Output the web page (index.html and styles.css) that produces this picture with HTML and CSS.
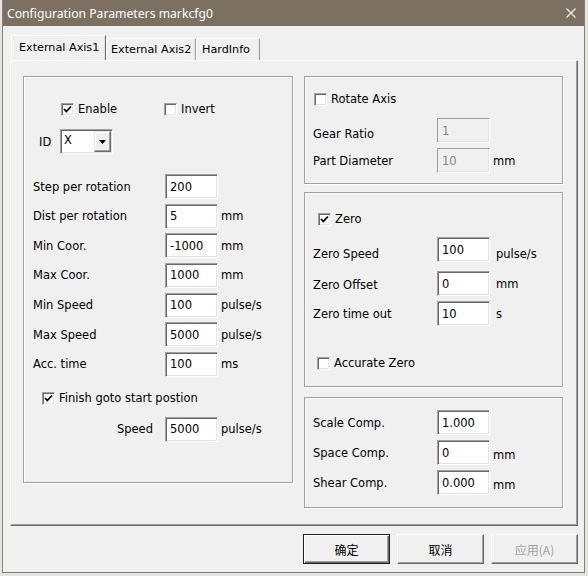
FILE: index.html
```html
<!DOCTYPE html>
<html lang="en">
<head>
    <meta charset="UTF-8">
    <title>Configuration Parameters markcfg0</title>
    <link rel="stylesheet" href="styles.css">
</head>
<body>
    <div class="window">
        <div class="titlebar">
            <span class="title">Configuration Parameters markcfg0</span>
            <svg class="close" width="10" height="10" viewBox="0 0 10 10">
                <path d="M0.5 0.5 L9.5 9.5 M9.5 0.5 L0.5 9.5" stroke="#fff" stroke-width="1.1" fill="none"/>
            </svg>
        </div>

        <div class="client">
            <div class="tabs">
                <div class="tab active">External Axis1</div>
                <div class="tab tab2">External Axis2</div>
                <div class="tab tab3">HardInfo</div>
            </div>

            <div class="page">
                <!-- eixo principal -->
                <div class="group g-main">
                    <div class="opts">
                        <label class="chk chk-first"><span class="box checked"><svg width="9" height="9" viewBox="0 0 9 9"><path d="M1 4 L3.3 6.5 L8 1.5" stroke="#000" stroke-width="1.8" fill="none"/></svg></span>Enable</label>
                        <label class="chk"><span class="box"></span>Invert</label>
                    </div>

                    <div class="id-row">
                        <span class="id-lbl">ID</span>
                        <div class="combo">
                            <span class="combo-val">X</span>
                            <span class="drop"><svg width="7" height="4" viewBox="0 0 7 4"><path d="M0 0 H7 L3.5 4 Z" fill="#000"/></svg></span>
                        </div>
                    </div>

                    <div class="fields">
                        <div class="row"><span class="lbl">Step per rotation</span><span class="field">200</span></div>
                        <div class="row"><span class="lbl">Dist per rotation</span><span class="field">5</span><span class="unit">mm</span></div>
                        <div class="row"><span class="lbl">Min Coor.</span><span class="field">-1000</span><span class="unit">mm</span></div>
                        <div class="row"><span class="lbl">Max Coor.</span><span class="field">1000</span><span class="unit">mm</span></div>
                        <div class="row"><span class="lbl">Min Speed</span><span class="field">100</span><span class="unit">pulse/s</span></div>
                        <div class="row"><span class="lbl">Max Speed</span><span class="field">5000</span><span class="unit">pulse/s</span></div>
                        <div class="row"><span class="lbl">Acc. time</span><span class="field">100</span><span class="unit">ms</span></div>
                    </div>

                    <label class="chk finish"><span class="box checked"><svg width="9" height="9" viewBox="0 0 9 9"><path d="M1 4 L3.3 6.5 L8 1.5" stroke="#000" stroke-width="1.8" fill="none"/></svg></span>Finish goto start postion</label>

                    <div class="row speed-row"><span class="lbl">Speed</span><span class="field">5000</span><span class="unit">pulse/s</span></div>
                </div>

                <div class="col">
                    <!-- eixo rotativo -->
                    <div class="group g-rotate">
                        <label class="chk"><span class="box"></span>Rotate Axis</label>
                        <div class="rrows">
                            <div class="row r1"><span class="lbl">Gear Ratio</span><span class="field off">1</span></div>
                            <div class="row"><span class="lbl">Part Diameter</span><span class="field off">10</span><span class="unit">mm</span></div>
                        </div>
                    </div>

                    <!-- zero -->
                    <div class="group g-zero">
                        <label class="chk"><span class="box checked"><svg width="9" height="9" viewBox="0 0 9 9"><path d="M1 4 L3.3 6.5 L8 1.5" stroke="#000" stroke-width="1.8" fill="none"/></svg></span>Zero</label>
                        <div class="rrows">
                            <div class="row z1"><span class="lbl">Zero Speed</span><span class="field">100</span><span class="unit">pulse/s</span></div>
                            <div class="row z2"><span class="lbl">Zero Offset</span><span class="field">0</span><span class="unit">mm</span></div>
                            <div class="row z3"><span class="lbl">Zero time out</span><span class="field">10</span><span class="unit">s</span></div>
                        </div>
                        <label class="chk accurate"><span class="box"></span>Accurate Zero</label>
                    </div>

                    <!-- compensacao -->
                    <div class="group g-comp">
                        <div class="rrows">
                            <div class="row"><span class="lbl">Scale Comp.</span><span class="field">1.000</span></div>
                            <div class="row"><span class="lbl">Space Comp.</span><span class="field">0</span><span class="unit">mm</span></div>
                            <div class="row"><span class="lbl">Shear Comp.</span><span class="field">0.000</span><span class="unit">mm</span></div>
                        </div>
                    </div>
                </div>
            </div>

            <div class="buttons">
                <button class="btn default">确定</button>
                <button class="btn">取消</button>
                <button class="btn" disabled>应用(A)</button>
            </div>
        </div>
    </div>
</body>
</html>
```

FILE: styles.css
```css
* {
    box-sizing: border-box;
}
html, body {
    margin: 0;
    padding: 0;
}
body {
    width: 588px;
    height: 576px;
    overflow: hidden;
    background-color: #e4e4e4;
    font-family: "DejaVu Sans", sans-serif;
    font-size: 11.5px;
    color: #000;
}
.window {
    margin-left: 2px;
    width: 583px;
    height: 573px;
    background-color: #f0f0f0;
    border: 1px solid #8a8070;
    border-top: none;
}
.titlebar {
    height: 26px;
    background-color: #7c7160;
    color: #fff;
    display: flex;
    align-items: center;
    padding: 0 8px 0 4px;
    font-family: "Noto Sans", sans-serif;
    font-size: 12.2px;
}
.close {
    margin-left: auto;
}
.client {
    padding: 9px 0 0 7px;
}

/* abas */
.tabs {
    display: flex;
    align-items: flex-end;
    height: 25px;
    padding-left: 1px;
    font-size: 11.2px;
}
.tab {
    height: 22px;
    width: 90px;
    padding-left: 4px;
    white-space: nowrap;
    display: flex;
    align-items: center;
    border: 1px solid;
    border-bottom: none;
    border-color: #fff #a0a0a0 transparent #fff;
    box-shadow: inset -1px 0 0 #e3e3e3;
}
.tab.active {
    height: 25px;
    width: 95px;
    padding-left: 7px;
    padding-bottom: 2px;
    border-right-color: #696969;
}
.tab3 {
    width: 64px;
    padding-left: 5px;
}

.page {
    width: 568px;
    height: 466px;
    border: 1px solid;
    border-color: #fff #696969 #696969 #fff;
    box-shadow: inset -1px -1px 0 #a0a0a0;
    display: flex;
    gap: 11px;
    padding: 15px 0 0 12px;
}
.group {
    border: 1px solid #a0a0a0;
    box-shadow: inset 1px 1px 0 #fff, 1px 1px 0 #fff;
}
.g-main {
    width: 270px;
    height: 407px;
    padding-top: 26px;
}
.col {
    display: flex;
    flex-direction: column;
    width: 259px;
}
.g-rotate {
    height: 108px;
    padding: 16px 0 0 9px;
}
.g-zero {
    height: 195px;
    margin-top: 8px;
    padding: 20px 0 0 13px;
}
.g-comp {
    height: 111px;
    margin-top: 10px;
    padding-top: 12px;
}

/* checkbox */
.chk {
    display: flex;
    align-items: center;
    height: 13px;
    line-height: 13px;
    white-space: nowrap;
}
.box {
    width: 13px;
    height: 13px;
    margin-right: 4px;
    background-color: #fff;
    border: 1px solid;
    border-color: #a0a0a0 #fff #fff #a0a0a0;
    box-shadow: inset 1px 1px 0 #696969, inset -1px -1px 0 #e3e3e3;
    display: flex;
    align-items: center;
    justify-content: center;
}
.opts {
    display: flex;
    padding-left: 37px;
}
.chk-first {
    width: 103px;
}

.id-row {
    display: flex;
    align-items: center;
    margin-top: 13px;
    padding-left: 15px;
}
.id-lbl {
    width: 21px;
}
.combo {
    width: 53px;
    height: 25px;
    padding: 1px;
    display: flex;
    background-color: #fff;
    border: 1px solid;
    border-color: #a0a0a0 #fff #fff #a0a0a0;
    box-shadow: inset 1px 1px 0 #696969, inset -1px -1px 0 #e3e3e3;
}
.combo-val {
    flex: 1;
    padding-left: 2px;
    line-height: 19px;
}
.drop {
    width: 17px;
    height: 21px;
    background-color: #f0f0f0;
    border: 1px solid;
    border-color: #e3e3e3 #696969 #696969 #e3e3e3;
    box-shadow: inset -1px -1px 0 #a0a0a0, inset 1px 1px 0 #fff;
    display: flex;
    align-items: center;
    justify-content: center;
}

/* linhas de campos */
.row {
    display: flex;
    align-items: center;
    height: 25px;
}
.fields {
    margin-top: 20px;
    padding-left: 9px;
    display: flex;
    flex-direction: column;
    gap: 4.67px;
}
.lbl {
    width: 132px;
    white-space: nowrap;
}
.field {
    width: 53px;
    height: 25px;
    padding-left: 4px;
    display: flex;
    align-items: center;
    background-color: #fff;
    border: 1px solid;
    border-color: #a0a0a0 #fff #fff #a0a0a0;
    box-shadow: inset 1px 1px 0 #696969, inset -1px -1px 0 #e3e3e3;
}
.field.off {
    background-color: #f0f0f0;
    color: #838383;
    box-shadow: inset -1px -1px 0 #e3e3e3;
}
.unit {
    margin-left: 3px;
}
.finish {
    margin-top: 15px;
    padding-left: 18px;
}
.speed-row {
    margin-top: 12px;
    padding-left: 9px;
}
.speed-row .lbl {
    text-align: right;
    padding-right: 12px;
}

.rrows {
    display: flex;
    flex-direction: column;
    gap: 5px;
    padding-left: 8px;
}
.rrows .lbl {
    width: 124px;
}
.g-rotate .rrows {
    margin-top: 12px;
    margin-left: -9px;
}
.r1 .lbl {
    margin-top: 6px;
}
.g-zero .rrows {
    margin-top: 11px;
    margin-left: -13px;
}
.g-zero .unit {
    margin-left: 6px;
}
.z1 .lbl, .z1 .unit {
    margin-top: 8px;
}
.z2 {
    margin-top: 4px;
}
.z2 .lbl {
    margin-top: 3px;
}
.accurate {
    margin-top: 31px;
    margin-left: -1px;
}
.g-comp .unit {
    margin-top: 5px;
}

/* botoes */
.buttons {
    display: flex;
    gap: 7px;
    margin-top: 8px;
    padding-left: 293px;
}
.btn {
    width: 87px;
    height: 30px;
    padding: 0;
    font-family: "Noto Sans CJK SC", sans-serif;
    font-size: 12px;
    color: #000;
    background-color: #f0f0f0;
    border: 1px solid;
    border-color: #fff #696969 #696969 #fff;
    box-shadow: inset -1px -1px 0 #a0a0a0;
}
.btn.default {
    border: 1px solid #1e1e1e;
    box-shadow: inset 1px 1px 0 #fff, inset -1px -1px 0 #696969, inset -2px -2px 0 #a0a0a0;
}
.btn:disabled {
    color: #a3a3a3;
}
```
